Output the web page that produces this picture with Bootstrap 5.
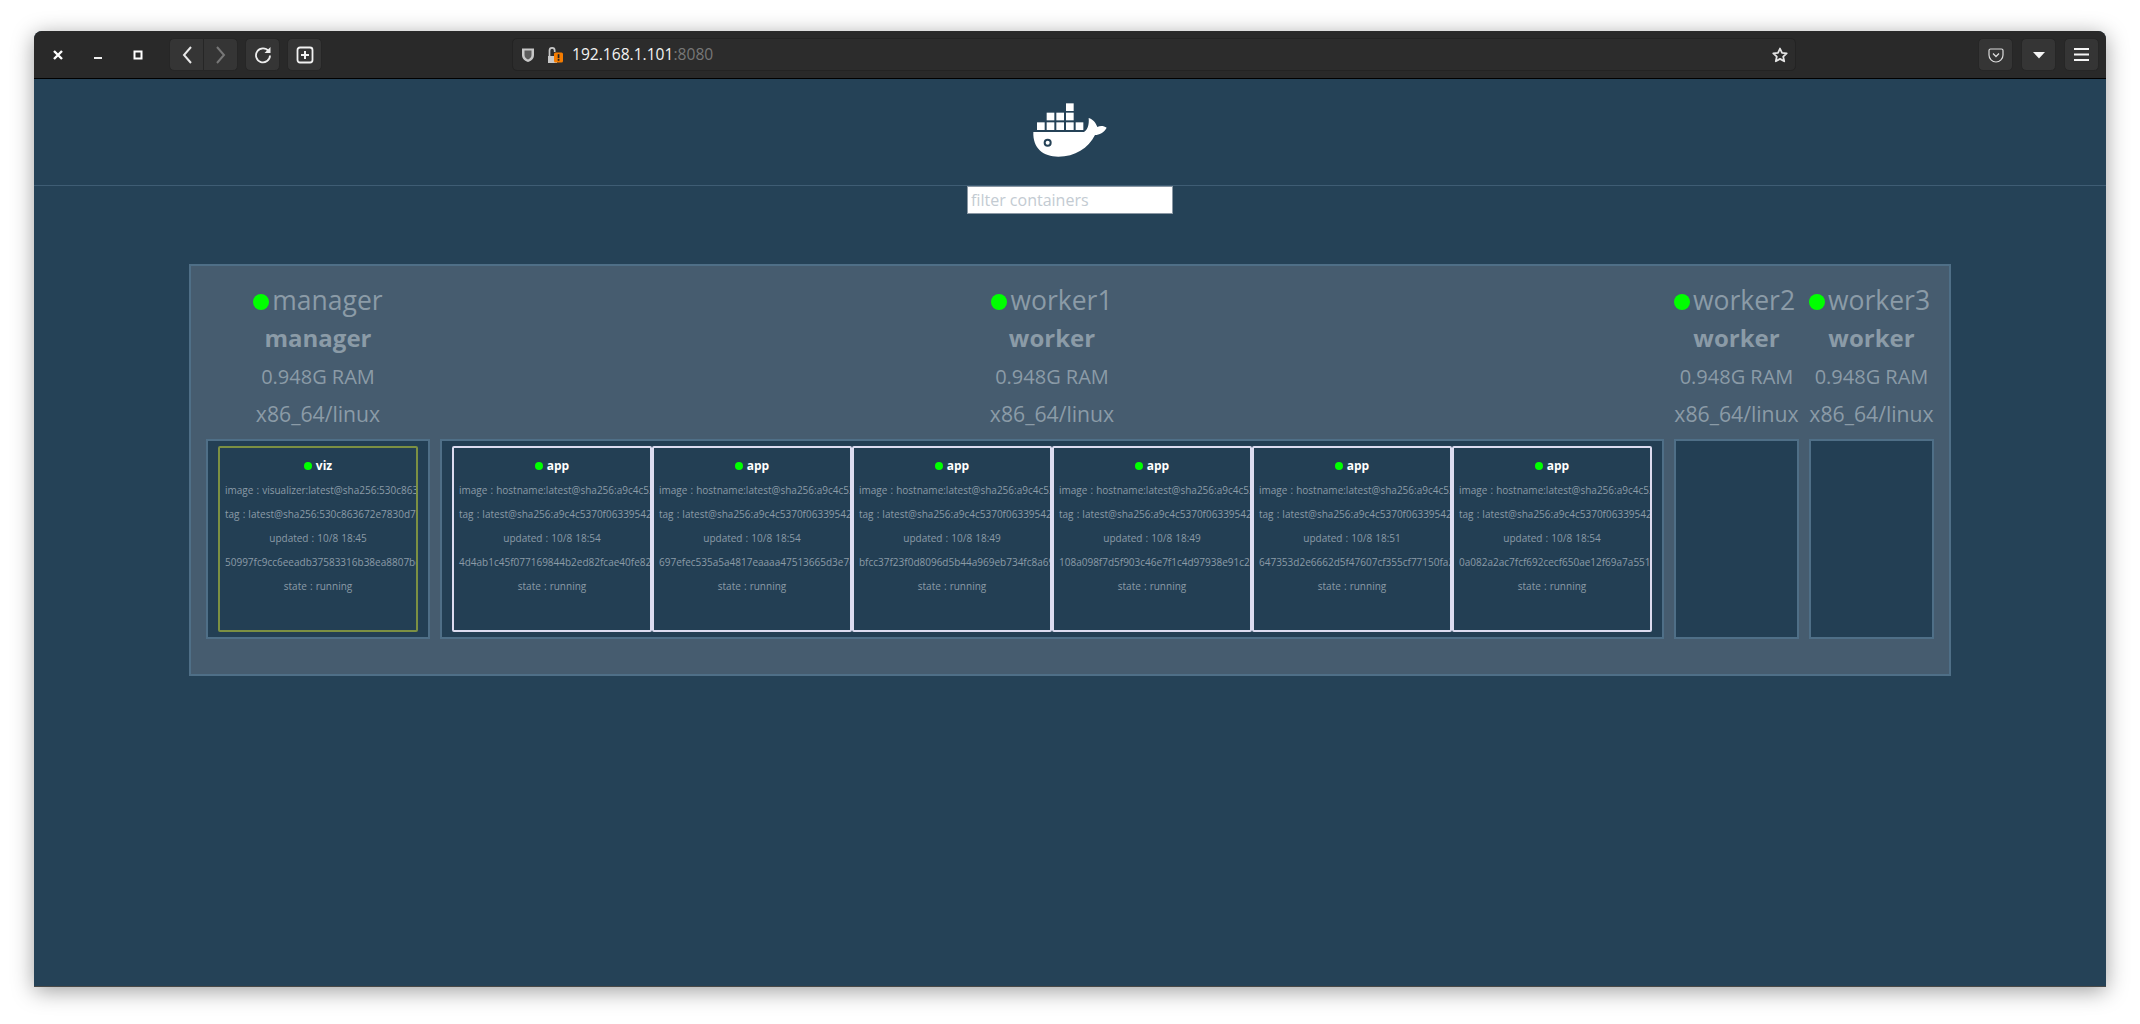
<!DOCTYPE html>
<html lang="en">
<head>
<meta charset="utf-8">
<title>Visualizer</title>
<link href="https://cdn.jsdelivr.net/npm/bootstrap@5.3.0/dist/css/bootstrap.min.css" rel="stylesheet">
<style>
html,body{height:1024px;overflow:hidden}
body{background:#fff;padding:31px 34px 37px;font-family:"Open Sans",sans-serif}
.win{height:100%;border-radius:8px 8px 0 0;box-shadow:0 4px 22px rgba(0,0,0,.38);overflow:hidden;background:#254257;border-bottom:1px solid #4a4a48}
.chrome{height:48px;flex:none;background:#292929;border-bottom:1px solid #000;padding:7px 7px 7px 0}
.wm{width:40px;height:33px;margin-right:0}
.wm-first{margin-left:4px}
.tb{width:35px;height:33px;padding:0;background:#353535;border:1px solid #262626;border-radius:5px;--bs-btn-hover-bg:#353535}
.gap-first{margin-left:11px}
.gap-next{margin-left:7px}
.urlbar{width:1284px;height:33px;margin-left:190px;background:#2c2c2c;border:1px solid #232323;border-radius:5px;color:#f2f2f2;font-size:15.6px;padding:0 7px 0 4px}
.url-dim{color:#777}
.urltext{margin-left:9px}
.lockicon{margin-left:12px}
.endgroup{margin-left:auto;gap:8px}
.pagehead{height:107px;flex:none;border-bottom:1px solid #3f5d74;padding-top:21px}
.filterbox{width:206px;height:28px;border:1px solid #8a97a3;background:#fff;padding:0 3px;font-size:16px;border-radius:0;display:block}
.filterbox::placeholder{color:#c3cbd2;opacity:1}
.cluster{margin-top:50px;background:#465c6f;border:2px solid #4f6f87;padding:15px 15px 35px;gap:10px}
.hostcol{flex:none}
.hostcol-narrow{width:125px}
.hostline{line-height:38px;height:38px;white-space:nowrap;color:#8b9ba7;text-align:center}
.hostname{font-size:26.5px;font-weight:400}
.hostrole{font-size:24px;font-weight:700}
.hostinfo{font-size:20px;font-weight:400}
.hostram{height:39px;line-height:40px}
.hostarch{font-size:21.2px;height:38px;line-height:36px;margin-bottom:5px}
.bigdot{width:16px;height:16px;background:#0f0;display:inline-block;margin-right:3px;vertical-align:0}
.tasks{background:#233f54;border:2px solid #4f6f87;height:200px;padding:5px 10px}
.slot{flex:0 0 200px;width:200px;height:186px;border:2px solid #dcdcf0;border-radius:2px;background:#233f54;overflow:hidden;padding:6px 5px;text-align:center}
.slot-viz{border-color:#7c9043}
.slot-title{color:#fff;font-weight:700;font-size:12px;line-height:24px;white-space:nowrap}
.slot-line{color:#8b9ba7;font-size:10px;word-spacing:.5px;line-height:24px;white-space:nowrap}
.minidot{width:8px;height:8px;background:#0f0;display:inline-block;margin-right:4px}
</style>
</head>
<body>
<div class="win d-flex flex-column">
  <div class="chrome d-flex align-items-center">
    <div class="wm wm-first d-flex align-items-center justify-content-center"><svg width="10" height="10" viewBox="0 0 10 10"><path d="M1 1l8 8M9 1l-8 8" stroke="#fff" stroke-width="2.4"/></svg></div>
    <div class="wm d-flex align-items-center justify-content-center"><svg width="10" height="10" viewBox="0 0 10 10"><rect x="1" y="7" width="8" height="2" fill="#f0f0f0"/></svg></div>
    <div class="wm d-flex align-items-center justify-content-center"><svg width="10" height="10" viewBox="0 0 10 10"><rect x="1.5" y="1.5" width="7" height="7" fill="none" stroke="#fff" stroke-width="2"/></svg></div>
    <div class="btn-group gap-first">
      <button class="btn tb d-flex align-items-center justify-content-center" aria-label="Back"><svg width="12" height="20" viewBox="0 0 12 20"><path d="M10 2L3 10l7 8" fill="none" stroke="#e8e8e8" stroke-width="2"/></svg></button>
      <button class="btn tb d-flex align-items-center justify-content-center" aria-label="Forward"><svg width="12" height="20" viewBox="0 0 12 20"><path d="M2 2l7 8-7 8" fill="none" stroke="#777" stroke-width="2"/></svg></button>
    </div>
    <button class="btn tb gap-next d-flex align-items-center justify-content-center" aria-label="Reload"><svg width="18" height="18" viewBox="0 0 18 18"><path d="M14.6 5.2A7 7 0 1 0 16 9.5" fill="none" stroke="#ededed" stroke-width="1.8"/><path d="M16.5 1v6h-6z" fill="#ededed"/></svg></button>
    <button class="btn tb gap-next d-flex align-items-center justify-content-center" aria-label="New tab"><svg width="18" height="18" viewBox="0 0 18 18"><rect x="1.5" y="1.5" width="15" height="15" rx="2.5" fill="none" stroke="#f2f2f2" stroke-width="1.8"/><path d="M9 5v8M5 9h8" stroke="#f2f2f2" stroke-width="2"/></svg></button>
    <div class="urlbar d-flex align-items-center">
      <svg class="ms-1" width="14" height="16" viewBox="0 0 14 16"><path d="M1 1.5h12v6.5c0 3.6-2.6 6-6 7-3.4-1-6-3.4-6-7z" fill="#c8c8c8"/><path d="M3.5 3.5h7v4.5c0 2.3-1.5 3.8-3.5 4.6-2-.8-3.5-2.3-3.5-4.6z" fill="#5c5c5c"/></svg>
      <svg class="lockicon" width="16" height="18" viewBox="0 0 16 18"><path d="M1 10h9v7H1z" fill="#c8c8c8"/><path d="M2.5 10V4.500a2.600 2.600 0 0 1 5.200 0V6" fill="none" stroke="#c8c8c8" stroke-width="1.700"/><rect x="7" y="6.500" width="9" height="10" rx="1.500" fill="#f57c00"/><rect x="10.700" y="8.200" width="1.700" height="4" fill="#222"/><rect x="10.700" y="13" width="1.700" height="1.800" fill="#222"/></svg>
      <span class="urltext">192.168.1.101<span class="url-dim">:8080</span></span>
      <svg class="ms-auto" width="16" height="16" viewBox="0 0 16 16"><path d="M8 1.500l2 4.400 4.700.5-3.500 3.200 1 4.700L8 11.900l-4.200 2.400 1-4.700L1.300 6.400 6 5.900z" fill="none" stroke="#e4e4e4" stroke-width="1.800" stroke-linejoin="round"/></svg>
    </div>
    <div class="d-flex endgroup">
      <button class="btn tb d-flex align-items-center justify-content-center" aria-label="Pocket"><svg width="16" height="16" viewBox="0 0 16 16"><path d="M2.500 2h11a1.500 1.500 0 0 1 1.500 1.500V8a7 7 0 0 1-14 0V3.500A1.500 1.500 0 0 1 2.500 2z" fill="none" stroke="#dcdcdc" stroke-width="1.200"/><path d="M5 6.500L8 9.500l3-3" fill="none" stroke="#dcdcdc" stroke-width="1.300"/></svg></button>
      <button class="btn tb d-flex align-items-center justify-content-center" aria-label="Dropdown"><svg width="12" height="8" viewBox="0 0 12 8"><path d="M0 1h12L6 7.500z" fill="#f5f5f5"/></svg></button>
      <button class="btn tb d-flex align-items-center justify-content-center" aria-label="Menu"><svg width="15" height="13" viewBox="0 0 15 13"><path d="M0 1h15M0 6.500h15M0 12h15" stroke="#f5f5f5" stroke-width="2"/></svg></button>
    </div>
  </div>

  <div class="pagehead d-flex justify-content-center">
    <svg width="80" height="60" viewBox="210 60 240 180" aria-label="Docker">
      <g fill="#fff">
        <rect x="231" y="127" width="23" height="23"/><rect x="260" y="127" width="23" height="23"/><rect x="289" y="127" width="23" height="23"/><rect x="318" y="127" width="23" height="23"/><rect x="347" y="127" width="23" height="23"/>
        <rect x="260" y="98" width="23" height="23"/><rect x="289" y="98" width="23" height="23"/><rect x="318" y="98" width="23" height="23"/>
        <rect x="318" y="70" width="23" height="23"/>
        <path d="M220 156H372C382 150 388 135 386 114C398 118 408 128 412 141C422 136 432 138 440 143C432 158 418 164 405 165C385 205 345 230 295 230C250 230 218 205 220 156Z"/>
      </g>
      <circle cx="263" cy="188" r="12" fill="#254257"/><circle cx="263" cy="188" r="6" fill="#fff"/>
    </svg>
  </div>

  <div class="d-flex justify-content-center"><input class="filterbox" type="text" placeholder="filter containers" aria-label="filter containers"></div>

  <div class="d-flex justify-content-center">
    <div class="cluster d-flex">
      <div class="hostcol">
        <div class="hostline hostname"><span class="bigdot rounded-circle"></span>manager</div>
        <div class="hostline hostrole">manager</div>
        <div class="hostline hostinfo hostram">0.948G RAM</div>
        <div class="hostline hostinfo hostarch">x86_64/linux</div>
        <div class="tasks d-flex">
          <div class="slot slot-viz">
            <div class="slot-title"><span class="minidot rounded-circle"></span>viz</div>
            <div class="slot-line">image : visualizer:latest@sha256:530c8636</div>
            <div class="slot-line">tag : latest@sha256:530c863672e7830d75</div>
            <div class="slot-line">updated : 10/8 18:45</div>
            <div class="slot-line">50997fc9cc6eeadb37583316b38ea8807bc</div>
            <div class="slot-line">state : running</div>
          </div>
        </div>
      </div>
      <div class="hostcol">
        <div class="hostline hostname"><span class="bigdot rounded-circle"></span>worker1</div>
        <div class="hostline hostrole">worker</div>
        <div class="hostline hostinfo hostram">0.948G RAM</div>
        <div class="hostline hostinfo hostarch">x86_64/linux</div>
        <div class="tasks d-flex">
          <div class="slot">
            <div class="slot-title"><span class="minidot rounded-circle"></span>app</div>
            <div class="slot-line">image : hostname:latest@sha256:a9c4c5370</div>
            <div class="slot-line">tag : latest@sha256:a9c4c5370f06339542b</div>
            <div class="slot-line">updated : 10/8 18:54</div>
            <div class="slot-line">4d4ab1c45f077169844b2ed82fcae40fe82a</div>
            <div class="slot-line">state : running</div>
          </div>
          <div class="slot">
            <div class="slot-title"><span class="minidot rounded-circle"></span>app</div>
            <div class="slot-line">image : hostname:latest@sha256:a9c4c5370</div>
            <div class="slot-line">tag : latest@sha256:a9c4c5370f06339542b</div>
            <div class="slot-line">updated : 10/8 18:54</div>
            <div class="slot-line">697efec535a5a4817eaaaa47513665d3e7e</div>
            <div class="slot-line">state : running</div>
          </div>
          <div class="slot">
            <div class="slot-title"><span class="minidot rounded-circle"></span>app</div>
            <div class="slot-line">image : hostname:latest@sha256:a9c4c5370</div>
            <div class="slot-line">tag : latest@sha256:a9c4c5370f06339542b</div>
            <div class="slot-line">updated : 10/8 18:49</div>
            <div class="slot-line">bfcc37f23f0d8096d5b44a969eb734fc8a69</div>
            <div class="slot-line">state : running</div>
          </div>
          <div class="slot">
            <div class="slot-title"><span class="minidot rounded-circle"></span>app</div>
            <div class="slot-line">image : hostname:latest@sha256:a9c4c5370</div>
            <div class="slot-line">tag : latest@sha256:a9c4c5370f06339542b</div>
            <div class="slot-line">updated : 10/8 18:49</div>
            <div class="slot-line">108a098f7d5f903c46e7f1c4d97938e91c27</div>
            <div class="slot-line">state : running</div>
          </div>
          <div class="slot">
            <div class="slot-title"><span class="minidot rounded-circle"></span>app</div>
            <div class="slot-line">image : hostname:latest@sha256:a9c4c5370</div>
            <div class="slot-line">tag : latest@sha256:a9c4c5370f06339542b</div>
            <div class="slot-line">updated : 10/8 18:51</div>
            <div class="slot-line">647353d2e6662d5f47607cf355cf77150fa2</div>
            <div class="slot-line">state : running</div>
          </div>
          <div class="slot">
            <div class="slot-title"><span class="minidot rounded-circle"></span>app</div>
            <div class="slot-line">image : hostname:latest@sha256:a9c4c5370</div>
            <div class="slot-line">tag : latest@sha256:a9c4c5370f06339542b</div>
            <div class="slot-line">updated : 10/8 18:54</div>
            <div class="slot-line">0a082a2ac7fcf692cecf650ae12f69a7a551b</div>
            <div class="slot-line">state : running</div>
          </div>
        </div>
      </div>
      <div class="hostcol hostcol-narrow">
        <div class="hostline hostname text-start"><span class="bigdot rounded-circle"></span>worker2</div>
        <div class="hostline hostrole">worker</div>
        <div class="hostline hostinfo hostram">0.948G RAM</div>
        <div class="hostline hostinfo hostarch">x86_64/linux</div>
        <div class="tasks"></div>
      </div>
      <div class="hostcol hostcol-narrow">
        <div class="hostline hostname text-start"><span class="bigdot rounded-circle"></span>worker3</div>
        <div class="hostline hostrole">worker</div>
        <div class="hostline hostinfo hostram">0.948G RAM</div>
        <div class="hostline hostinfo hostarch">x86_64/linux</div>
        <div class="tasks"></div>
      </div>
    </div>
  </div>
</div>
</body>
</html>
